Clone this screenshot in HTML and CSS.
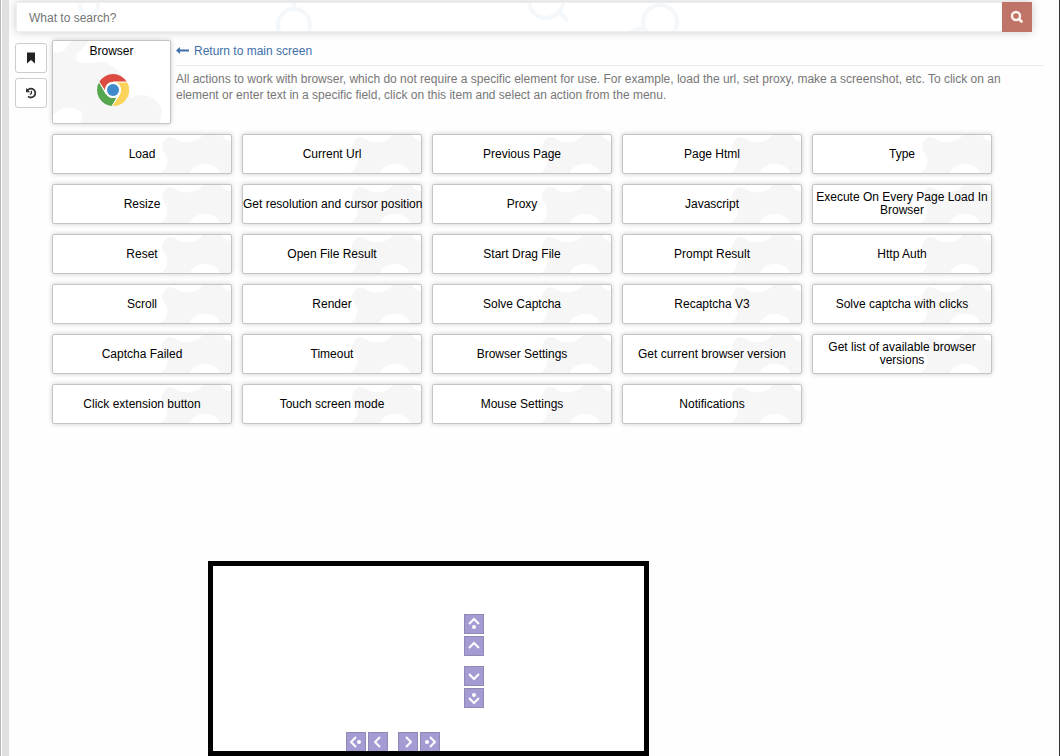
FILE: index.html
```
<!doctype html>
<html lang="en">
<head>
  <meta charset="UTF-8" />
  <meta name="viewport" content="width=device-width, initial-scale=1.0" />
  <title>Browser actions</title>
  <link rel="stylesheet" href="styles.css">
</head>
<body>

<div class="splitter"></div>

<main class="main">
  <form class="search">
    <input class="search-input" type="text" placeholder="What to search?" aria-label="Search" />
    <button class="search-button" type="submit" aria-label="Search">
      <svg width="14" height="14" viewBox="0 0 14 14">
        <circle cx="6" cy="6" r="4" fill="none" stroke="#fff5ee" stroke-width="2.4" />
        <path d="M9.2,9.2 l 2.3,2.3" stroke="#fff5ee" stroke-width="2.8" stroke-linecap="round" />
      </svg>
    </button>
  </form>

  <div class="content">
    <nav class="side">
      <button class="side-button" type="button" aria-label="Bookmarks">
        <svg width="14" height="14" viewBox="0 0 14 14">
          <path d="M3,1.5 h 8 v 11 l -4,-3.5 l -4,3.5 z" fill="#222" />
        </svg>
      </button>
      <button class="side-button" type="button" aria-label="History">
        <svg width="14" height="14" viewBox="0 0 14 14" fill="none" stroke="#333">
          <path d="M3.4,4.4 A 4.4,4.4 0 1 1 4,10.4" stroke-width="1.8" />
          <path d="M2,2 v 4.2 h 4.2 z" fill="#333" stroke="none" />
          <path d="M7.4,4.8 v 2.6 l -1.6,1.2" stroke-width="1.3" />
        </svg>
      </button>
    </nav>

    <div class="panel">
      <header class="head">
        <div class="group">
          <span>Browser</span>
          <svg class="group-logo" width="32" height="32" viewBox="0 0 32 32">
            <path d="M2.2,8 A 16,16 0 0 1 29.9,8 L 16,8 A 8,8 0 0 0 9,12.2 L 8,16 z" fill="#dd4b40" />
            <path d="M29.9,8 A 16,16 0 0 1 15,32 L 22.9,20 A 8,8 0 0 0 21,9.8 L 19,8 z" fill="#fbd35a" />
            <path d="M2.2,8 A 16,16 0 0 0 15,32 L 19.5,23.2 A 8,8 0 0 1 9.1,20 z" fill="#55a64e" />
            <path d="M2.2,8 L 9.1,20 M15,32 L 22.9,20 M29.9,8 L 16,8" stroke="#fff" stroke-width="1" />
            <circle cx="16" cy="16" r="8" fill="#fff" />
            <circle cx="16" cy="16" r="6" fill="#3e8bcc" />
          </svg>
        </div>
        <div class="about">
          <a class="back" href="#">
            <svg width="14" height="10" viewBox="0 0 14 10">
              <path d="M0,4.5 l 4,-3.5 v 2.5 h 9 v 2 h -9 v 2.5 z" fill="#3d6fa8" />
            </svg>
            Return to main screen
          </a>
          <p class="about-text">All actions to work with browser, which do not require a specific element for use. For example, load the url, set proxy, make a screenshot, etc. To click on an element or enter text in a specific field, click on this item and select an action from the menu.</p>
        </div>
      </header>

      <div class="actions">
        <button class="action" type="button">Load</button>
        <button class="action" type="button">Current Url</button>
        <button class="action" type="button">Previous Page</button>
        <button class="action" type="button">Page Html</button>
        <button class="action" type="button">Type</button>
        <button class="action" type="button">Resize</button>
        <button class="action action-long" type="button">Get resolution and cursor position</button>
        <button class="action" type="button">Proxy</button>
        <button class="action" type="button">Javascript</button>
        <button class="action" type="button">Execute On Every Page Load In Browser</button>
        <button class="action" type="button">Reset</button>
        <button class="action" type="button">Open File Result</button>
        <button class="action" type="button">Start Drag File</button>
        <button class="action" type="button">Prompt Result</button>
        <button class="action" type="button">Http Auth</button>
        <button class="action" type="button">Scroll</button>
        <button class="action" type="button">Render</button>
        <button class="action" type="button">Solve Captcha</button>
        <button class="action" type="button">Recaptcha V3</button>
        <button class="action" type="button">Solve captcha with clicks</button>
        <button class="action" type="button">Captcha Failed</button>
        <button class="action" type="button">Timeout</button>
        <button class="action" type="button">Browser Settings</button>
        <button class="action" type="button">Get current browser version</button>
        <button class="action" type="button">Get list of available browser versions</button>
        <button class="action" type="button">Click extension button</button>
        <button class="action" type="button">Touch screen mode</button>
        <button class="action" type="button">Mouse Settings</button>
        <button class="action" type="button">Notifications</button>
      </div>

      <section class="frame">
        <div class="arrows arrows-vertical">
          <button class="arrow" type="button" aria-label="To top">
            <svg class="arrow-icon" viewBox="0 0 18 18"><path d="M4,9 l 5,-5 l 5,5" /><circle cx="9" cy="12" r="2" /></svg>
          </button>
          <button class="arrow" type="button" aria-label="Up">
            <svg class="arrow-icon" viewBox="0 0 18 18"><path d="M4,11 l 5,-5 l 5,5" /></svg>
          </button>
          <button class="arrow arrow-next" type="button" aria-label="Down">
            <svg class="arrow-icon" viewBox="0 0 18 18"><path d="M4,7 l 5,5 l 5,-5" /></svg>
          </button>
          <button class="arrow" type="button" aria-label="To bottom">
            <svg class="arrow-icon" viewBox="0 0 18 18"><path d="M4,9 l 5,5 l 5,-5" /><circle cx="9" cy="6" r="2" /></svg>
          </button>
        </div>
        <div class="arrows arrows-horizontal">
          <button class="arrow" type="button" aria-label="To start">
            <svg class="arrow-icon" viewBox="0 0 18 18"><path d="M9,4 l -5,5 l 5,5" /><circle cx="12" cy="9" r="2" /></svg>
          </button>
          <button class="arrow" type="button" aria-label="Left">
            <svg class="arrow-icon" viewBox="0 0 18 18"><path d="M11,4 l -5,5 l 5,5" /></svg>
          </button>
          <button class="arrow arrow-next" type="button" aria-label="Right">
            <svg class="arrow-icon" viewBox="0 0 18 18"><path d="M7,4 l 5,5 l -5,5" /></svg>
          </button>
          <button class="arrow" type="button" aria-label="To end">
            <svg class="arrow-icon" viewBox="0 0 18 18"><path d="M9,4 l 5,5 l -5,5" /><circle cx="6" cy="9" r="2" /></svg>
          </button>
        </div>
      </section>
    </div>
  </div>
</main>

</body>
</html>
```
FILE: styles.css
```
* {
  box-sizing: border-box;
}
body {
  display: flex;
  min-height: 100vh;
  margin: 0;
  border-right: 1px solid #333;
  background: #fefefe;
  font: 12px/16px "Liberation Sans", Arial, sans-serif;
}
button {
  padding: 0;
  font: inherit;
  cursor: pointer;
}
svg {
  display: block;
}
.splitter {
  width: 9px;
  border-left: 1px solid #b8b8b8;
  background: linear-gradient(90deg, #fff 1px, #e0e0e0 1px);
}
.main {
  flex: 1;
  min-width: 0;
  padding: 2px 15px 0 6px;
}
/*Search*/
.search {
  display: flex;
  height: 30px;
  margin: 0 12px 8px 1px;
  background: #fff;
  box-shadow: 0 0 10px rgba(0,0,0,0.2);
}
.search-input {
  flex: 1;
  min-width: 0;
  padding: 2px 12px 0;
  border: 1px solid #eee;
  border-right: 0;
  outline: none;
  font: inherit;
  background: #fff url("data:image/svg+xml,%3Csvg xmlns='http://www.w3.org/2000/svg' width='720' height='30' fill='none' stroke='%23f5f8fa' stroke-width='4'%3E%3Ccircle cx='72' cy='3' r='9'/%3E%3Ccircle cx='277' cy='22' r='16'/%3E%3Cpath d='M277,6 v -6'/%3E%3Ccircle cx='529' cy='-2' r='17'/%3E%3Cpath d='M542,9 l 9,9'/%3E%3Ccircle cx='643' cy='19' r='17'/%3E%3Cpath d='M627,24 l -14,5'/%3E%3C/svg%3E") no-repeat;
}
.search-input::placeholder {
  color: #757575;
  opacity: 1;
}
.search-button {
  display: flex;
  align-items: center;
  justify-content: center;
  width: 30px;
  border: 0;
  background: #c07468;
}
/*Content*/
.content {
  display: flex;
  gap: 5px;
}
.side {
  display: flex;
  flex-direction: column;
  gap: 5px;
  padding-top: 3px;
}
.side-button {
  display: flex;
  align-items: center;
  justify-content: center;
  width: 32px;
  height: 30px;
  border: 1px solid #ccc;
  border-radius: 3px;
  background: #fff;
}
.panel {
  flex: 1;
  min-width: 0;
}
.head {
  display: flex;
  gap: 5px;
  margin-bottom: 10px;
}
.group {
  display: flex;
  flex-direction: column;
  align-items: center;
  flex: none;
  width: 119px;
  height: 84px;
  padding-top: 2px;
  border: 1px solid #c4c4c4;
  border-radius: 2px;
  box-shadow: 0 0 5px rgba(0,0,0,0.2);
  background: #fff url("data:image/svg+xml,%3Csvg xmlns='http://www.w3.org/2000/svg' width='118' height='83'%3E%3Cpath d='M0,11 C 8,12 12,10 14,5 L 18,0 H 36 C 30,8 22,12 23,18 C 26,25 40,21 50,21 C 62,24 74,36 78,57 C 90,50 106,56 109,70 L 107,83 H 25 C 36,76 26,64 12,67 C 6,68 3,72 0,74 z' fill='%23f6f6f6'/%3E%3C/svg%3E") no-repeat;
}
.group-logo {
  margin: 15px 0 0 2px;
}
.about {
  flex: 1;
  min-width: 0;
}
.back {
  display: flex;
  align-items: center;
  gap: 4px;
  padding: 3px 0 6px;
  border-bottom: 1px solid #e8ecee;
  color: #3d6fa8;
  text-decoration: none;
}
.about-text {
  margin: 5px 0 0;
  color: #777;
}
.actions {
  display: grid;
  grid-template-columns: repeat(auto-fill, 180px);
  gap: 10px;
}
.action {
  height: 40px;
  border: 1px solid #c4c4c4;
  border-radius: 2px;
  box-shadow: 0 0 5px rgba(0,0,0,0.2);
  color: #000;
  line-height: 13px;
  background: #fff url("data:image/svg+xml,%3Csvg xmlns='http://www.w3.org/2000/svg' width='70' height='38'%3E%3Cpath d='M0,38 C 6,34 8,26 5,20 L 1,14 C 0,10 4,3 8,2 L 14,3 C 18,8 30,9 38,4 L 42,0 H 61 C 63,4 66,6 70,6 V 38 H 59 C 55,26 33,26 29,38 z' fill='%23f6f6f6'/%3E%3C/svg%3E") no-repeat right top;
}
.action-long {
  white-space: nowrap;
}
/*Frame with scroll arrows*/
.frame {
  display: flex;
  flex-direction: column;
  width: 441px;
  height: 195px;
  margin: 137px 0 0 156px;
  padding-top: 48px;
  border: 5px solid #000;
  background: #fff;
  overflow: hidden;
}
.arrows {
  display: flex;
  gap: 2px;
}
.arrows-vertical {
  flex-direction: column;
  margin-left: 251px;
}
.arrows-horizontal {
  margin: 24px 0 0 133px;
}
.arrow {
  flex: none;
  width: 20px;
  height: 20px;
  border: 1px solid #8f89b3;
  background: #a49bd3;
}
.arrows-vertical .arrow-next {
  margin-top: 8px;
}
.arrows-horizontal .arrow-next {
  margin-left: 8px;
}
.arrow-icon {
  fill: none;
  stroke: #fff;
  stroke-width: 2;
}
.arrow-icon circle {
  fill: #fff;
  stroke: none;
}
```
